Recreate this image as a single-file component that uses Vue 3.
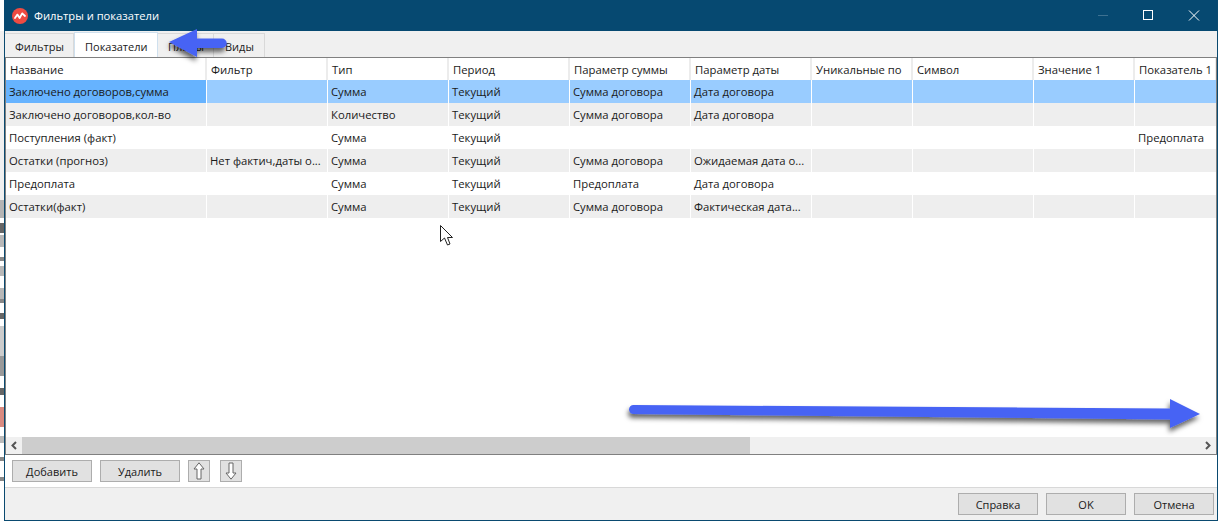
<script setup>
const cols = [
  { t: 'Название', w: 201 }, { t: 'Фильтр', w: 121 }, { t: 'Тип', w: 121 }, { t: 'Период', w: 121 },
  { t: 'Параметр суммы', w: 121 }, { t: 'Параметр даты', w: 121 }, { t: 'Уникальные по', w: 101 },
  { t: 'Символ', w: 121 }, { t: 'Значение 1', w: 101 }, { t: 'Показатель 1', w: 82 },
]
const rows = [
  ['Заключено договоров,сумма', '', 'Сумма', 'Текущий', 'Сумма договора', 'Дата договора', '', '', '', ''],
  ['Заключено договоров,кол-во', '', 'Количество', 'Текущий', 'Сумма договора', 'Дата договора', '', '', '', ''],
  ['Поступления (факт)', '', 'Сумма', 'Текущий', '', '', '', '', '', 'Предоплата'],
  ['Остатки (прогноз)', 'Нет фактич,даты о...', 'Сумма', 'Текущий', 'Сумма договора', 'Ожидаемая дата о...', '', '', '', ''],
  ['Предоплата', '', 'Сумма', 'Текущий', 'Предоплата', 'Дата договора', '', '', '', ''],
  ['Остатки(факт)', '', 'Сумма', 'Текущий', 'Сумма договора', 'Фактическая дата...', '', '', '', ''],
]
const tabs = ['Фильтры', 'Показатели', 'Планы', 'Виды']
const gridCols = cols.map((c) => c.w + 'px').join(' ')
const strip = [
  ['#f0f0f0', 169], ['#b4b4b4', 18], ['#ffffff', 5], ['#666666', 10], ['#ffffff', 2], ['#b8b8b8', 12], ['#ffffff', 10], ['#888888', 4],
  ['#ffffff', 5], ['#b8b8b8', 10], ['#ffffff', 12], ['#b8b8b8', 11], ['#888888', 4], ['#ffffff', 10], ['#666666', 6], ['#ffffff', 7],
  ['#cccccc', 30], ['#999999', 20], ['#ffffff', 12], ['#666666', 7], ['#ffffff', 12], ['#d98a80', 20], ['#ffffff', 9], ['#bbbbbb', 7],
  ['#ffffff', 14], ['#888888', 4], ['#ffffff', 16], ['#888888', 4], ['#ffffff', 36],
]
</script>

<template>
  <div class="page">
    <div class="backdrop">
      <div v-for="(s, i) in strip" :key="i" :style="{ background: s[0], height: s[1] + 'px' }"></div>
    </div>
    <div class="window">
      <header class="titlebar">
        <svg class="logo" width="16" height="16" viewBox="0 0 16 16">
          <circle cx="8" cy="8" r="8" fill="#ef4b42" />
          <path d="M3 10l2.4-3.4L7.6 10l2.6-4.6L13 8" fill="none" stroke="#fff" stroke-width="1.8" stroke-linejoin="round" stroke-linecap="round" />
        </svg>
        <span class="title">Фильтры и показатели</span>
        <div class="controls">
          <svg width="46" height="31" viewBox="0 0 46 31"><path d="M19 15.5h10" stroke="#3d7191" /></svg>
          <svg width="46" height="31" viewBox="0 0 46 31"><rect x="18.5" y="10.5" width="9" height="9" fill="none" stroke="#fff" /></svg>
          <svg width="46" height="31" viewBox="0 0 46 31"><path d="M18 10.5l10 10M28 10.5l-10 10" stroke="#fff" /></svg>
        </div>
      </header>

      <nav class="tabs">
        <div v-for="(t, i) in tabs" :key="t" class="tab" :class="{ active: i === 1 }">{{ t }}</div>
      </nav>

      <section class="table">
        <div class="grid head" :style="{ gridTemplateColumns: gridCols }">
          <div v-for="c in cols" :key="c.t" class="hcell">{{ c.t }}</div>
        </div>
        <div v-for="(r, i) in rows" :key="i" class="grid row" :class="{ sel: i === 0, alt: i % 2 === 1 }" :style="{ gridTemplateColumns: gridCols }">
          <div v-for="(v, j) in r" :key="j" class="cell">{{ v }}</div>
        </div>
        <div class="spacer"></div>
        <div class="scroll">
          <svg class="sarrow" width="16" height="17" viewBox="0 0 16 17"><path d="M10 5l-3.5 3.5L10 12" fill="none" stroke="#555" stroke-width="2" /></svg>
          <div class="thumb"></div>
          <div class="track"></div>
          <svg class="sarrow" width="17" height="17" viewBox="0 0 17 17"><path d="M7 5l3.5 3.5L7 12" fill="none" stroke="#555" stroke-width="2" /></svg>
        </div>
      </section>

      <div class="toolbar">
        <button class="btn wide">Добавить</button>
        <button class="btn wide">Удалить</button>
        <button class="btn icon">
          <svg width="12" height="18" viewBox="0 0 12 18"><path d="M6 .8L11 7H8v10H4V7H1z" fill="#fff" stroke="#666" /></svg>
        </button>
        <button class="btn icon down">
          <svg width="12" height="18" viewBox="0 0 12 18"><path d="M6 17.2L11 11H8V1H4v10H1z" fill="#fff" stroke="#666" /></svg>
        </button>
      </div>

      <footer class="footer">
        <button class="btn act">Справка</button>
        <button class="btn act">OK</button>
        <button class="btn act">Отмена</button>
      </footer>
    </div>

    <svg class="overlay" width="1219" height="521" viewBox="0 0 1219 521">
      <defs>
        <filter id="sh" x="-10%" y="-60%" width="120%" height="220%">
          <feDropShadow dx="-1" dy="4" stdDeviation="2.5" flood-color="#000" flood-opacity="0.6" />
        </filter>
      </defs>
      <path d="M169 42L197 29V38.5H222A4.7 4.7 0 0 1 222 48H197V57Z" fill="#4763f4" filter="url(#sh)" />
      <path d="M633.5 405L1170 408.5V399L1200 414L1170 428V419.5L633.5 414A4.5 4.5 0 0 1 633.5 405Z" fill="#4763f4" filter="url(#sh)" />
      <path d="M440.5 225.5V241.5L444.5 238L447.5 245L450 244L447.5 237.5H452.5Z" fill="#fff" stroke="#222" stroke-width="1" stroke-linejoin="round" />
    </svg>
  </div>
</template>

<style>
html, body { margin: 0; background: #fff; }
</style>

<style scoped>
.page {
  position: relative;
  width: 1219px;
  height: 521px;
  overflow: hidden;
  display: flex;
  font-family: "Open Sans", "Noto Sans", sans-serif;
  font-size: 11px;
  color: #1a1a1a;
}
.backdrop { width: 4px; flex: none; background: #fff; overflow: hidden; padding-top: 31px; box-sizing: border-box; }
.window {
  width: 1214px;
  height: 521px;
  flex: none;
  display: flex;
  flex-direction: column;
  background: #f0f0f0;
  border-left: 1px solid #0a4a70;
  border-right: 1px solid #0a4a70;
  border-bottom: 1px solid #0a4a70;
  box-sizing: border-box;
}
.titlebar {
  height: 31px;
  flex: none;
  margin-left: -1px;
  background: #064971;
  display: flex;
  align-items: center;
  padding-left: 8px;
  color: #fff;
}
.title { margin-left: 6px; font-size: 11.2px; }
.controls { margin-left: auto; display: flex; }
.tabs {
  height: 26px;
  flex: none;
  display: flex;
  align-items: flex-end;
  background: #f0f0f0;
}
.tab {
  height: 24px;
  line-height: 26px;
  padding: 0 0 0 10px;
  border: 1px solid #d9d9d9;
  border-bottom: none;
  border-left: none;
  box-sizing: border-box;
}
.tab:nth-child(1) { width: 69px; }
.tab:nth-child(2) { width: 84px; background: #fff; height: 25px; line-height: 27px; border: 1px solid #cfe0ee; border-bottom: none; }
.tab:nth-child(3) { width: 56px; }
.tab:nth-child(4) { width: 51px; padding-left: 11px; }
.table {
  flex: 1;
  border: 1px solid #808080;
  background: #fff;
  display: flex;
  flex-direction: column;
  min-height: 0;
  overflow: hidden;
  font-size: 11.3px;
}
.grid { display: grid; flex: none; overflow: hidden; }
.head { height: 22px; background: #fff; }
.hcell {
  padding-left: 4px;
  line-height: 23px;
  border-right: 2px solid #ececec;
  white-space: nowrap;
  overflow: hidden;
}
.row { height: 23px; background: #fff; }
.row.alt { background: #eeeeee; }
.row.sel { background: #99ccff; }
.cell {
  padding-left: 3px;
  line-height: 23px;
  white-space: nowrap;
  overflow: hidden;
  border-right: 1px solid #fff;
}
.row.sel .cell:first-child { background: #66b3ff; }
.spacer { flex: 1; }
.scroll { height: 17px; flex: none; display: flex; background: #f0f0f0; }
.sarrow { flex: none; }
.thumb { width: 728px; background: #cdcdcd; }
.track { flex: 1; }
.toolbar {
  height: 33px;
  flex: none;
  background: #fff;
  display: flex;
  align-items: flex-start;
  gap: 8px;
  padding: 5px 0 0 7px;
  border-bottom: 1px solid #d8d8d8;
  box-sizing: border-box;
}
.btn {
  font: inherit;
  color: #1a1a1a;
  background: #e1e1e1;
  border: 1px solid #adadad;
  padding: 0;
  height: 22px;
  display: flex;
  align-items: center;
  justify-content: center;
  box-sizing: border-box;
}
.wide { width: 80px; }
.icon { width: 22px; }
.down { margin-left: 2px; }
.footer {
  height: 32px;
  flex: none;
  display: flex;
  justify-content: flex-end;
  align-items: flex-start;
  gap: 8px;
  padding: 5px 3px 0 0;
  box-sizing: border-box;
}
.act { width: 80px; }
.overlay { position: absolute; left: 0; top: 0; pointer-events: none; }
</style>
